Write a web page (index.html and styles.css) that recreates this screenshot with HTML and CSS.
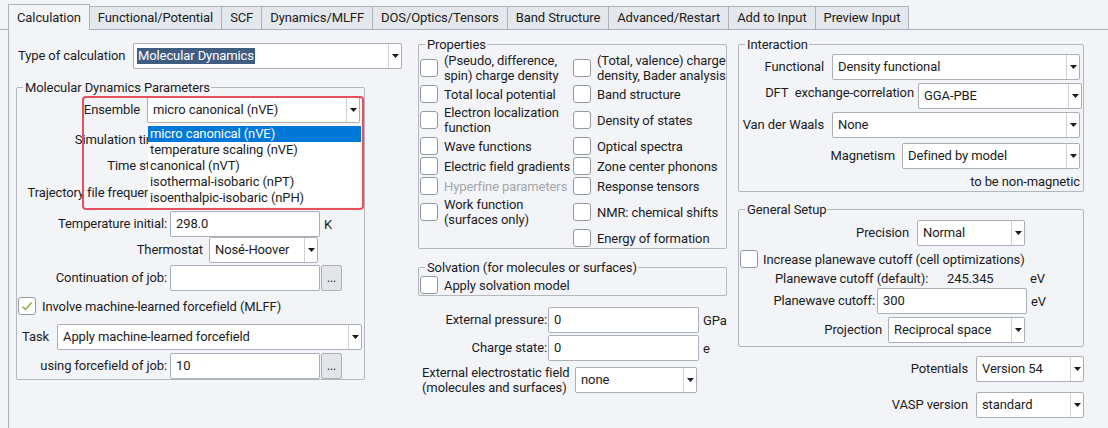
FILE: index.html
```html
<!DOCTYPE html>
<html>
<head>
<meta charset="utf-8">
<link rel="stylesheet" href="styles.css">
</head>
<body>
<div class="tabs">
  <div class="tab active">Calculation</div>
  <div class="tab">Functional/Potential</div>
  <div class="tab">SCF</div>
  <div class="tab">Dynamics/MLFF</div>
  <div class="tab">DOS/Optics/Tensors</div>
  <div class="tab">Band Structure</div>
  <div class="tab">Advanced/Restart</div>
  <div class="tab">Add to Input</div>
  <div class="tab">Preview Input</div>
</div>
<div class="pane">
  <div class="col col1">
    <div class="row type-row">
      <span class="lbl l-type">Type of calculation</span>
      <div class="sel w-type"><span class="val combo"><span class="hl">Molecular Dynamics</span></span><span class="arr"><svg width="7" height="4" viewBox="0 0 7 4"><path d="M0 0H7L3.5 4Z"/></svg></span></div>
    </div>
    <fieldset class="grp md">
      <legend>Molecular Dynamics Parameters</legend>
      <div class="row r-ens">
        <span class="lbl l-ens">Ensemble</span>
        <div class="sel w-ens anchor">
          <span class="val">micro canonical (nVE)</span><span class="arr"><svg width="7" height="4" viewBox="0 0 7 4"><path d="M0 0H7L3.5 4Z"/></svg></span>
          <ul class="drop">
            <li class="on">micro canonical (nVE)</li>
            <li>temperature scaling (nVE)</li>
            <li>canonical (nVT)</li>
            <li>isothermal-isobaric (nPT)</li>
            <li>isoenthalpic-isobaric (nPH)</li>
          </ul>
        </div>
        <div class="mark"></div>
      </div>
      <div class="row r-sim"><span class="lbl l-std">Simulation time:</span><span class="inp w150"></span></div>
      <div class="row r-step"><span class="lbl l-std">Time step:</span><span class="inp w150"></span></div>
      <div class="row r-traj"><span class="lbl l-std">Trajectory file frequency:</span><span class="inp w150"></span></div>
      <div class="row r-temp"><span class="lbl l-std">Temperature initial:</span><span class="inp w150">298.0</span><span class="unit">K</span></div>
      <div class="row r-thermo">
        <span class="lbl l-thermo">Thermostat</span>
        <div class="sel w-thermo"><span class="val">Nosé-Hoover</span><span class="arr"><svg width="7" height="4" viewBox="0 0 7 4"><path d="M0 0H7L3.5 4Z"/></svg></span></div>
      </div>
      <div class="row r-cont"><span class="lbl l-std">Continuation of job:</span><span class="inp w150"></span><span class="btn">...</span></div>
      <div class="row r-chk">
        <span class="cb"><svg width="16" height="16" viewBox="0 0 16 16"><path d="M3.5 8.5L6.5 11.5L12.5 4.5" fill="none" stroke="#86ad34" stroke-width="1.4"/></svg></span>
        <span class="cbtext">Involve machine-learned forcefield (MLFF)</span>
      </div>
      <div class="row r-task">
        <span class="lbl l-task">Task</span>
        <div class="sel w-task"><span class="val">Apply machine-learned forcefield</span><span class="arr"><svg width="7" height="4" viewBox="0 0 7 4"><path d="M0 0H7L3.5 4Z"/></svg></span></div>
      </div>
      <div class="row r-using"><span class="lbl l-std">using forcefield of job:</span><span class="inp w150">10</span><span class="btn">...</span></div>
    </fieldset>
  </div>

  <div class="col col2">
    <fieldset class="grp props">
      <legend>Properties</legend>
      <div class="pgrid">
        <div class="pc"><span class="cb"></span><span class="pt">(Pseudo, difference,<br>spin) charge density</span></div>
        <div class="pc"><span class="cb"></span><span class="pt">(Total, valence) charge<br>density, Bader analysis</span></div>
        <div class="pc"><span class="cb"></span><span class="pt">Total local potential</span></div>
        <div class="pc"><span class="cb"></span><span class="pt">Band structure</span></div>
        <div class="pc"><span class="cb"></span><span class="pt">Electron localization<br>function</span></div>
        <div class="pc"><span class="cb"></span><span class="pt">Density of states</span></div>
        <div class="pc"><span class="cb"></span><span class="pt">Wave functions</span></div>
        <div class="pc"><span class="cb"></span><span class="pt">Optical spectra</span></div>
        <div class="pc"><span class="cb"></span><span class="pt">Electric field gradients</span></div>
        <div class="pc"><span class="cb"></span><span class="pt">Zone center phonons</span></div>
        <div class="pc"><span class="cb"></span><span class="pt dis">Hyperfine parameters</span></div>
        <div class="pc"><span class="cb"></span><span class="pt">Response tensors</span></div>
        <div class="pc"><span class="cb"></span><span class="pt">Work function<br>(surfaces only)</span></div>
        <div class="pc"><span class="cb"></span><span class="pt">NMR: chemical shifts</span></div>
        <div class="pc"></div>
        <div class="pc"><span class="cb"></span><span class="pt">Energy of formation</span></div>
      </div>
    </fieldset>
    <fieldset class="grp solv">
      <legend>Solvation (for molecules or surfaces)</legend>
      <div class="pc"><span class="cb"></span><span class="pt">Apply solvation model</span></div>
    </fieldset>
    <div class="row r-press"><span class="lbl l-press">External pressure:</span><span class="inp w151">0</span><span class="unit">GPa</span></div>
    <div class="row r-charge"><span class="lbl l-press">Charge state:</span><span class="inp w151">0</span><span class="unit">e</span></div>
    <div class="row r-field">
      <span class="lbl l-field">External electrostatic field<br>(molecules and surfaces)</span>
      <div class="sel w-field"><span class="val">none</span><span class="arr"><svg width="7" height="4" viewBox="0 0 7 4"><path d="M0 0H7L3.5 4Z"/></svg></span></div>
    </div>
  </div>

  <div class="col col3">
    <fieldset class="grp inter">
      <legend>Interaction</legend>
      <div class="row r-func">
        <span class="lbl l-func">Functional</span>
        <div class="sel w-func"><span class="val">Density functional</span><span class="arr"><svg width="7" height="4" viewBox="0 0 7 4"><path d="M0 0H7L3.5 4Z"/></svg></span></div>
      </div>
      <div class="row r-dft">
        <span class="lbl l-dft">DFT&nbsp; exchange-correlation</span>
        <div class="sel w-dft"><span class="val">GGA-PBE</span><span class="arr"><svg width="7" height="4" viewBox="0 0 7 4"><path d="M0 0H7L3.5 4Z"/></svg></span></div>
      </div>
      <div class="row r-vdw">
        <span class="lbl l-func">Van der Waals</span>
        <div class="sel w-func"><span class="val">None</span><span class="arr"><svg width="7" height="4" viewBox="0 0 7 4"><path d="M0 0H7L3.5 4Z"/></svg></span></div>
      </div>
      <div class="row r-mag">
        <span class="lbl l-mag">Magnetism</span>
        <div class="sel w-mag"><span class="val">Defined by model</span><span class="arr"><svg width="7" height="4" viewBox="0 0 7 4"><path d="M0 0H7L3.5 4Z"/></svg></span></div>
      </div>
      <div class="note">to be non-magnetic</div>
    </fieldset>
    <fieldset class="grp gen">
      <legend>General Setup</legend>
      <div class="row r-prec">
        <span class="lbl l-prec">Precision</span>
        <div class="sel w108"><span class="val">Normal</span><span class="arr"><svg width="7" height="4" viewBox="0 0 7 4"><path d="M0 0H7L3.5 4Z"/></svg></span></div>
      </div>
      <div class="pc r-inc"><span class="cb"></span><span class="pt">Increase planewave cutoff (cell optimizations)</span></div>
      <div class="row r-def">
        <span class="l-def">Planewave cutoff (default):</span><span class="v-def">245.345</span><span>eV</span>
      </div>
      <div class="row r-cut"><span class="lbl l-cut">Planewave cutoff:</span><span class="inp w150">300</span><span class="unit">eV</span></div>
      <div class="row r-proj">
        <span class="lbl l-proj">Projection</span>
        <div class="sel w-proj"><span class="val">Reciprocal space</span><span class="arr"><svg width="7" height="4" viewBox="0 0 7 4"><path d="M0 0H7L3.5 4Z"/></svg></span></div>
      </div>
    </fieldset>
    <div class="row r-pot">
      <span class="lbl l-pot">Potentials</span>
      <div class="sel w108"><span class="val">Version 54</span><span class="arr"><svg width="7" height="4" viewBox="0 0 7 4"><path d="M0 0H7L3.5 4Z"/></svg></span></div>
    </div>
    <div class="row r-vasp">
      <span class="lbl l-pot">VASP version</span>
      <div class="sel w108"><span class="val">standard</span><span class="arr"><svg width="7" height="4" viewBox="0 0 7 4"><path d="M0 0H7L3.5 4Z"/></svg></span></div>
    </div>
  </div>
</div>
</body>
</html>
```
FILE: styles.css
```css
* { box-sizing: border-box; }
html, body { margin: 0; padding: 0; }
body {
  width: 1108px;
  height: 428px;
  overflow: hidden;
  background: #f3f4f8;
  font-family: Roboto, "Liberation Sans", sans-serif;
  font-size: 13px;
  letter-spacing: -0.1px;
  color: #1c1c1c;
}

/* tabs */
.tabs {
  display: flex;
  align-items: flex-end;
  height: 30px;
  padding: 4px 0 0 8px;
  border-bottom: 1px solid #a9aeb7;
}
.tab {
  height: 23px;
  padding: 1px 8px 0 8px;
  line-height: 20px;
  border: 1px solid #aeb3bb;
  border-bottom: none;
  margin-left: -1px;
  background: #e4e7ec;
  white-space: nowrap;
}
.tab:first-child { margin-left: 0; }
.tab.active {
  height: 26px;
  margin-bottom: -1px;
  padding-top: 3px;
  background: #f3f4f8;
  position: relative;
  z-index: 1;
}

/* pane */
.pane {
  display: flex;
  align-items: flex-start;
  margin-left: 8px;
  height: 400px;
  border-left: 1px solid #a9aeb7;
  padding: 7px 0 0 7px;
}
.col { flex: none; display: flex; flex-direction: column; }
.col1 { width: 387px; margin-right: 15px; }
.col2 { width: 309px; margin-right: 11px; }
.col3 { width: 346px; }

/* groups */
.grp {
  margin: 0;
  min-width: 0;
  border: 1px solid #b3b7bf;
  border-radius: 2px;
  padding: 0 0 0 1px;
}
.grp legend {
  margin-left: 5px;
  padding: 0 1px 0 2px;
  line-height: 15px;
  font-size: 13px;
}

/* rows */
.row { display: flex; align-items: center; height: 26px; flex: none; }
.lbl { flex: none; white-space: nowrap; text-align: right; line-height: 16px; }
.unit { margin-left: 4px; white-space: nowrap; }

.sel {
  flex: none;
  display: flex;
  height: 26px;
  border: 1px solid #abafb7;
  border-radius: 2px;
  background: #fff;
}
.sel .val {
  flex: 1;
  min-width: 0;
  padding-left: 5px;
  line-height: 24px;
  white-space: nowrap;
  overflow: hidden;
}
.sel .val.combo { padding-left: 3px; display: flex; align-items: center; }
.hl { background: #3f5c81; color: #fff; line-height: 16px; padding: 0 1px 0 1px; }
.sel .arr {
  flex: none;
  width: 13px;
  border-left: 1px solid #cfd2d7;
  display: flex;
  align-items: center;
  justify-content: center;
}
.arr svg { display: block; fill: #1a1a1a; }

.inp {
  flex: none;
  height: 26px;
  border: 1px solid #abafb7;
  border-radius: 2px;
  background: #fff;
  padding-left: 5px;
  line-height: 24px;
}
.w150 { width: 150px; }
.w151 { width: 151px; }
.w108 { width: 108px; }
.btn {
  flex: none;
  width: 21px;
  height: 26px;
  margin-left: 1px;
  border: 1px solid #abafb7;
  border-radius: 2px;
  background: #e2e5ea;
  text-align: center;
  line-height: 24px;
  font-size: 12px;
}

.cb {
  flex: none;
  width: 18px;
  height: 18px;
  border: 1px solid #9499a1;
  border-radius: 3px;
  background: #fff;
  display: flex;
  align-items: center;
  justify-content: center;
}

/* column 1 */
.type-row { margin-top: 6px; }
.l-type { width: 117px; text-align: left; padding-left: 2px; }
.w-type { width: 269px; }

.md { width: 349px; margin-top: 11px; padding-top: 2px; }
.r-ens { position: relative; z-index: 2; }
.l-ens { width: 122px; margin-right: 7px; }
.w-ens { width: 213px; }
.anchor { position: relative; }
.drop {
  position: absolute;
  z-index: 5;
  top: calc(100% + 3px);
  left: 0;
  width: 213px;
  margin: 0;
  padding: 1px 0;
  list-style: none;
  background: #fff;
}
.drop li { height: 16px; line-height: 16px; padding-left: 2px; white-space: nowrap; }
.drop li.on { background: #0078d7; color: #fff; }
.mark {
  position: absolute;
  z-index: 6;
  left: 64px;
  top: -1px;
  width: 282px;
  height: 114px;
  border: 2px solid #e9505f;
  border-radius: 4px;
  pointer-events: none;
}
.l-std { width: 149px; margin-right: 3px; }
.r-sim { margin-top: 4px; }
.r-step { margin-top: 0; }
.r-traj { margin-top: 1px; }
.r-temp { margin-top: 5px; }
.r-thermo { margin-top: 0; }
.l-thermo { width: 185px; margin-right: 6px; }
.w-thermo { width: 109px; }
.r-cont { margin-top: 2px; }
.r-chk { margin-top: 2px; }
.cbtext { margin-left: 6px; white-space: nowrap; }
.r-task { margin-top: 5px; }
.l-task { width: 39px; text-align: left; padding-left: 4px; }
.w-task { width: 305px; }
.r-using { margin-top: 3px; }

/* column 2 */
.props { width: 309px; }
.pgrid { display: grid; grid-template-columns: 153px 1fr; }
.pc { display: flex; align-items: center; min-height: 20px; }
.pt { margin-left: 6px; line-height: 15px; padding: 1px 0; white-space: nowrap; }
.pt.dis { color: #a3a6ab; }
.solv { width: 309px; margin-top: 11px; }
.r-press { margin-top: 11px; }
.l-press { width: 130px; padding-right: 1px; }
.r-charge { margin-top: 2px; }
.r-field { margin-top: 4px; height: 30px; }
.l-field { width: 157px; text-align: left; padding-left: 4px; line-height: 15px; }
.w-field { width: 122px; }

/* column 3 */
.inter { width: 346px; padding-top: 2px; padding-bottom: 1px; }
.l-func { width: 84px; margin-right: 8px; }
.w-func { width: 248px; }
.r-dft { margin-top: 3px; align-items: flex-start; }
.l-dft { width: 174px; margin-right: 4px; padding-top: 2px; }
.w-dft { width: 164px; }
.r-vdw { margin-top: 3px; }
.r-mag { margin-top: 5px; }
.l-mag { width: 155px; margin-right: 7px; }
.w-mag { width: 178px; }
.note { margin-top: 5px; text-align: right; padding-right: 3px; line-height: 16px; }

.gen { width: 346px; margin-top: 10px; padding-top: 3px; padding-bottom: 3px; }
.l-prec { width: 169px; margin-right: 8px; }
.r-inc { margin-top: 3px; }
.r-inc .pt { margin-left: 5px; }
.r-def { height: 16px; margin-top: 1px; }
.l-def { width: 207px; padding-left: 35px; white-space: nowrap; }
.v-def { width: 83px; }
.r-cut { margin-top: 2px; }
.l-cut { width: 135px; margin-right: 2px; }
.r-proj { margin-top: 3px; }
.l-proj { width: 142px; margin-right: 6px; }
.w-proj { width: 137px; }

.r-pot { margin-top: 9px; }
.l-pot { width: 230px; margin-right: 8px; }
.r-vasp { margin-top: 10px; }
```
